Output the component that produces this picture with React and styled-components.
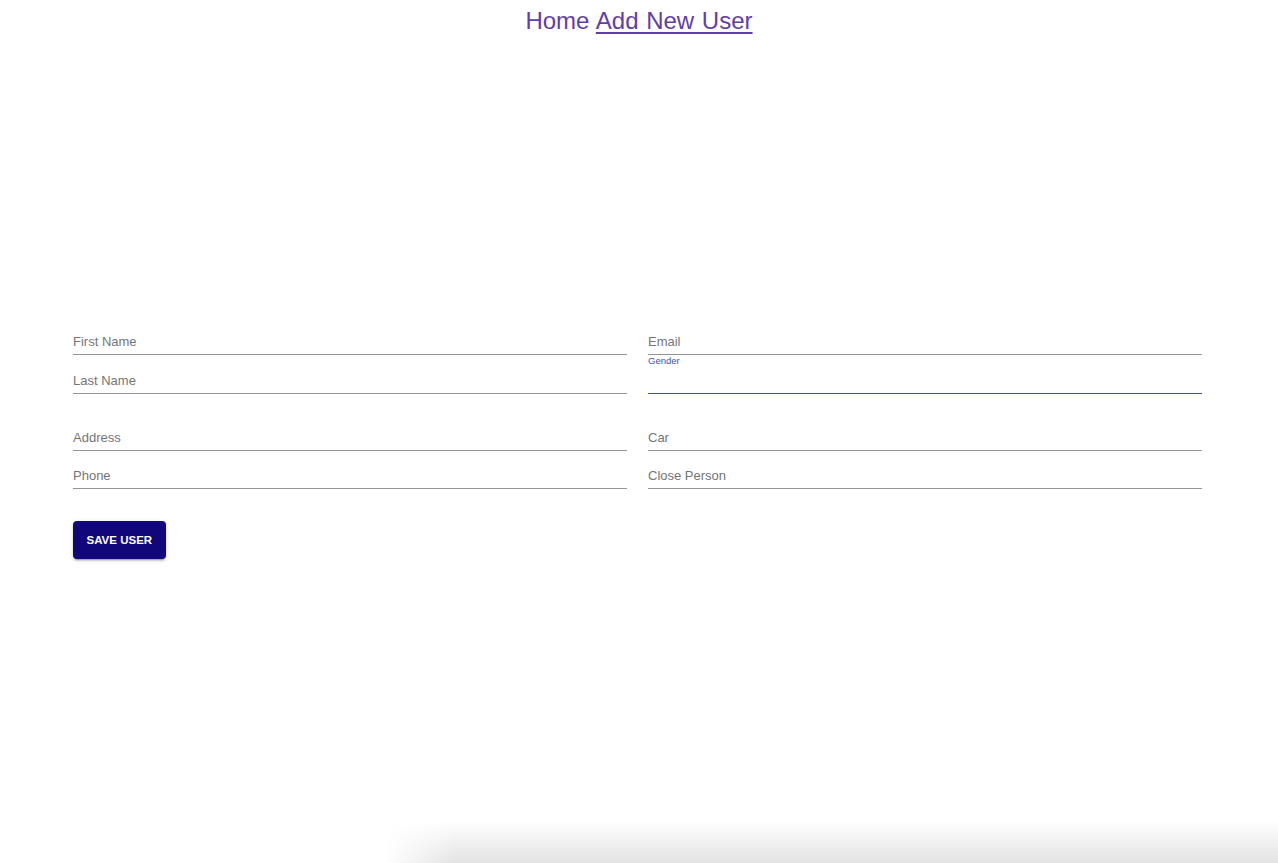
import React from 'react';
import styled, { createGlobalStyle } from 'styled-components';

const GlobalStyle = createGlobalStyle`
  html, body {
    margin: 0;
    padding: 0;
    background: #fff;
    font-family: "Liberation Sans", Arial, sans-serif;
  }
`;

const Page = styled.div`
  min-height: 863px;
`;

const Nav = styled.nav`
  padding-top: 7px;
  text-align: center;
  font-size: 24px;
  line-height: normal;
  word-spacing: 1px;
`;

const NavLink = styled.a`
  color: #5f3eaa;
  text-decoration: ${({ active }) => (active ? 'underline' : 'none')};
  text-decoration-thickness: 2px;
  text-underline-offset: 3px;
  cursor: pointer;
`;

const Form = styled.form`
  padding: 0 76px 0 73px;
  margin-top: 282px;
`;

const FieldGrid = styled.div`
  display: grid;
  grid-template-columns: 1fr 1fr;
  column-gap: 21px;
  align-items: end;
  margin-bottom: ${({ spaced }) => (spaced ? '19px' : '0')};
`;

const Field = styled.div`
  box-sizing: border-box;
  height: 38px;
  display: flex;
  align-items: flex-end;
  padding-bottom: 5px;
  border-bottom: 1px solid #949494;
  font-size: 13px;
  line-height: 15px;
  color: #757575;
`;

const SelectField = styled.div`
  box-sizing: border-box;
  height: 39px;
  border-bottom: 1px solid #3f51b5;
`;

const SelectLabel = styled.div`
  font-size: 9.5px;
  line-height: 11px;
  color: #3f51b5;
`;

const SaveButton = styled.button`
  margin-top: 32px;
  height: 38px;
  padding: 0 13.5px;
  border: none;
  border-radius: 4px;
  background: #11067a;
  color: #fff;
  font-family: "Liberation Sans", Arial, sans-serif;
  font-weight: 700;
  font-size: 11.5px;
  text-transform: uppercase;
  box-shadow: 0 3px 1px -2px rgba(0, 0, 0, 0.2), 0 2px 2px 0 rgba(0, 0, 0, 0.14),
    0 1px 5px 0 rgba(0, 0, 0, 0.12);
  cursor: pointer;
`;

const WindowShade = styled.div`
  position: fixed;
  left: 385px;
  right: 0;
  bottom: 0;
  height: 42px;
  background: linear-gradient(to bottom, rgba(0, 0, 0, 0), rgba(0, 0, 0, 0.11));
  -webkit-mask-image: linear-gradient(to right, transparent, #000 70px);
  mask-image: linear-gradient(to right, transparent, #000 70px);
  pointer-events: none;
`;

const App = () => (
  <Page>
    <GlobalStyle />
    <Nav>
      <NavLink>Home</NavLink> <NavLink active>Add New User</NavLink>
    </Nav>
    <Form onSubmit={(e) => e.preventDefault()}>
      <FieldGrid spaced>
        <Field>First Name</Field>
        <Field>Email</Field>
        <Field>Last Name</Field>
        <SelectField>
          <SelectLabel>Gender</SelectLabel>
        </SelectField>
      </FieldGrid>
      <FieldGrid>
        <Field>Address</Field>
        <Field>Car</Field>
        <Field>Phone</Field>
        <Field>Close Person</Field>
      </FieldGrid>
      <SaveButton type="submit">Save User</SaveButton>
    </Form>
    <WindowShade />
  </Page>
);

export default App;
